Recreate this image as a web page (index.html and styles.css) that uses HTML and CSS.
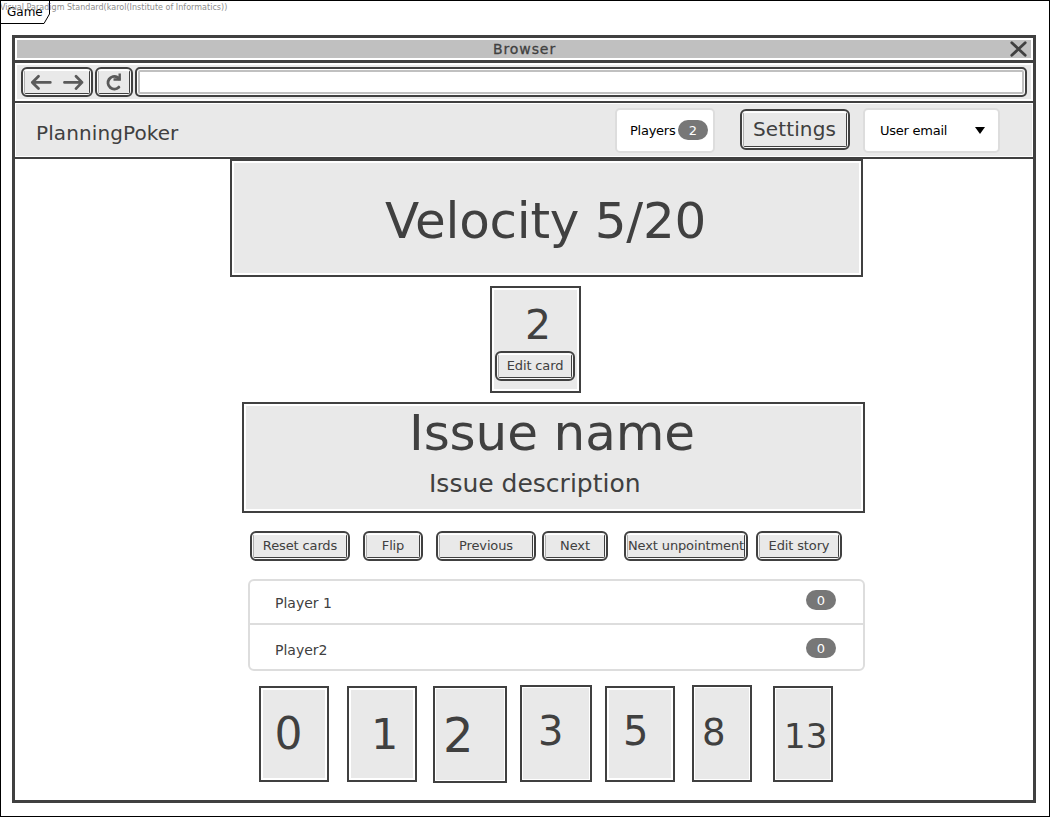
FILE: index.html
```html
<!DOCTYPE html>
<html lang="en">
<head>
<meta charset="utf-8">
<title>Game</title>
<link rel="stylesheet" href="styles.css">
</head>
<body>
<div class="frame">
  <div class="frame-tab">
    <svg class="tab-shape" width="51" height="25" viewBox="0 0 51 25"><path d="M49.500 0V14L44 23.500H0" fill="none" stroke="#000"/></svg>
    <span class="tab-name">Game</span>
    <span class="watermark">Visual Paradigm Standard(karol(Institute of Informatics))</span>
  </div>
  <div class="browser">
    <header class="titlebar">
      <span class="title">Browser</span>
      <svg class="close" width="18" height="18" viewBox="0 0 18 18"><path d="M1.800 2.700L15.200 15.300M15.200 2.700L1.800 15.300" stroke="#404040" stroke-width="2.800" stroke-linecap="round"/></svg>
    </header>
    <div class="toolbar">
      <div class="btn history">
        <svg width="68" height="26" viewBox="0 0 68 26" fill="none" stroke="#5a5a5a" stroke-width="2.800" stroke-linecap="round" stroke-linejoin="round"><path d="M15.500 7.200L9.300 13.400L15.500 19.600M9.300 13.400H27.300M53 7.200L59 13.400L53 19.600M59 13.400H41.500"/></svg>
      </div>
      <div class="btn reload">
        <svg width="34" height="26" viewBox="0 0 34 26" fill="none" stroke="#5a5a5a" stroke-width="3"><path d="M21.800 18.200A6.300 6.300 0 1 1 20.400 8.200L22 9.800" stroke-linecap="round"/><path d="M22.700 4.500V10.500H16.500" stroke-width="2.400"/></svg>
      </div>
      <div class="address"></div>
    </div>
    <nav class="nav">
      <span class="brand">PlanningPoker</span>
      <div class="panel players"><span>Players</span><b class="badge">2</b></div>
      <div class="btn settings">Settings</div>
      <div class="panel user"><span>User email</span><svg width="10" height="7" viewBox="0 0 10 7"><path d="M0 0H10L5 7Z"/></svg></div>
    </nav>
    <main>
      <section class="box velocity">Velocity 5/20</section>
      <section class="box current"><div class="current-value">2</div><div class="btn edit-card">Edit card</div></section>
      <section class="box issue"><h1>Issue name</h1><p>Issue description</p></section>
      <div class="actions">
        <div class="btn reset">Reset cards</div>
        <div class="btn flip">Flip</div>
        <div class="btn previous">Previous</div>
        <div class="btn next">Next</div>
        <div class="btn unpointed">Next unpointment</div>
        <div class="btn story">Edit story</div>
      </div>
      <div class="list">
        <div class="row first"><span>Player 1</span><b class="badge">0</b></div>
        <div class="row second"><span>Player2</span><b class="badge">0</b></div>
      </div>
      <div class="deck">
        <div class="box c0">0</div>
        <div class="box c1">1</div>
        <div class="box thin c2">2</div>
        <div class="box thin c3">3</div>
        <div class="box c5">5</div>
        <div class="box thin c8">8</div>
        <div class="box thin c13">13</div>
      </div>
    </main>
  </div>
</div>
</body>
</html>
```
FILE: styles.css
```css
* { box-sizing: border-box; }
body {
  margin: 0;
  background: #fff;
  color: #404040;
  font-family: "DejaVu Sans", sans-serif;
  white-space: nowrap;
}
svg { display: block; }
.frame {
  position: relative;
  width: 1050px;
  height: 817px;
  border: 1px solid #000;
  padding: 34px 0 0 11px;
  overflow: hidden;
}

/* diagram tab and watermark lie over the frame corner */
.frame-tab { position: absolute; left: -1px; top: -1px; line-height: 1; }
.tab-shape { position: absolute; left: 0; top: 0; }
.tab-name { position: absolute; left: 7px; top: 6px; font-size: 12px; color: #000; }
.watermark { position: absolute; left: 0; top: 4px; font-size: 8px; letter-spacing: 0.02px; color: #8c8c8c; }

.browser { width: 1024px; height: 768px; border: 3px solid #404040; }

.titlebar {
  display: flex;
  height: 25px;
  padding-top: 4px;
  border-bottom: 3px solid #404040;
  background: #c0c0c0;
  box-shadow: inset 0 0 0 2px #fff;
}
.title { margin-left: 478px; width: 517px; font-size: 14px; line-height: 14px; letter-spacing: 0.9px; -webkit-text-stroke: 0.3px #404040; }
.close { margin-top: -2px; }

.toolbar {
  display: flex;
  gap: 2px;
  height: 40px;
  padding: 4px 6px;
  border-bottom: 2px solid #404040;
  background: #e9e9e9;
  box-shadow: inset 0 0 0 2px #fff;
}
.history { width: 72px; }
.reload { width: 38px; }
.address {
  width: 892px;
  height: 30px;
  border: 2px solid #404040;
  border-radius: 5px;
  background: #fff;
  box-shadow: inset 0 0 0 1px #fff, inset 0 0 0 3px #c0c0c0;
}

.btn {
  position: relative;
  flex: none;
  height: 30px;
  border: 2px solid #404040;
  border-radius: 6px;
  background: #e9e9e9;
  box-shadow: inset 0 0 0 2px #fafafa;
  font-size: 13px;
  line-height: 13px;
  letter-spacing: -0.13px;
  text-align: center;
}
.btn::after {
  content: "";
  position: absolute;
  inset: 1px;
  border: 1px solid;
  border-color: #fff #404040 #404040 #b0b0b0;
  border-radius: 2px;
}

.nav {
  display: flex;
  height: 56px;
  padding: 5px 0 0 21px;
  border-bottom: 2px solid #404040;
  background: #e9e9e9;
  box-shadow: inset 0 0 0 1px #fff;
}
.brand { width: 579px; padding-top: 15px; font-size: 20px; line-height: 20px; letter-spacing: 0.1px; }
.panel {
  display: flex;
  height: 45px;
  border: 2px solid #ddd;
  border-radius: 5px;
  background: #fff;
  color: #000;
  font-size: 13px;
  line-height: 13px;
  letter-spacing: -0.25px;
}
.players { width: 100px; padding: 10px 0 0 13px; }
.players span { width: 48px; padding-top: 4px; }
.badge {
  width: 30px;
  height: 20px;
  padding-top: 4px;
  border-radius: 10px;
  background: #777;
  color: #fff;
  font-size: 13px;
  font-weight: normal;
  line-height: 13px;
  letter-spacing: 0;
  text-align: center;
}
.settings { width: 110px; height: 41px; margin: 1px 13px 0 25px; padding: 8px 1px 0 0; font-size: 20px; line-height: 20px; letter-spacing: 0.15px; }
.user { width: 137px; padding: 14px 0 0 15px; }
.user span { width: 95px; }
.user svg { margin-top: 3px; }

.box { flex: none; border: 2px solid #404040; background: #e9e9e9; box-shadow: inset 0 0 0 2px #fff; }
.thin { box-shadow: inset 0 0 0 1px #fff; }

.velocity { width: 633px; height: 118px; margin-left: 215px; padding: 35px 0 0 153px; font-size: 50px; line-height: 50px; letter-spacing: -0.25px; }
.current { width: 91px; height: 107px; margin: 9px 0 0 475px; padding-top: 17px; }
.current-value { padding-left: 33px; font-size: 41px; line-height: 41px; }
.edit-card { width: 80px; margin: 5px 0 0 3px; padding-top: 6px; }
.issue { width: 623px; height: 111px; margin: 9px 0 0 227px; padding-top: 4px; }
.issue h1 { margin: 0; padding-left: 165px; font-size: 50px; font-weight: normal; line-height: 50px; letter-spacing: -0.1px; }
.issue p { margin: 13px 0 0; padding-left: 185px; font-size: 25px; line-height: 25px; }

.actions { display: flex; margin: 18px 0 0 235px; }
.actions .btn { padding-top: 6px; }
.reset { width: 100px; margin-right: 13px; }
.flip { width: 60px; margin-right: 13px; }
.previous { width: 100px; margin-right: 6px; }
.next { width: 66px; margin-right: 16px; }
.unpointed { width: 124px; margin-right: 8px; }
.story { width: 86px; }

.list { width: 617px; height: 92px; margin: 18px 0 0 233px; border: 2px solid #ddd; border-radius: 6px; }
.row { display: flex; padding-left: 25px; font-size: 14px; line-height: 14px; }
.row span { width: 531px; }
.first { height: 44px; padding-top: 9px; border-bottom: 2px solid #ddd; }
.first span { padding-top: 6px; }
.second { padding-top: 13px; }
.second span { padding-top: 5px; }

.deck { display: flex; align-items: flex-start; margin: 14px 0 0 244px; line-height: 1; }
.deck .box { height: 96px; margin-top: 1px; }
.deck .c0 { width: 70px; margin-right: 18px; padding: 24px 0 0 13.5px; font-size: 44px; }
.deck .c1 { width: 70px; margin-right: 16px; padding: 25px 0 0 22px; font-size: 43px; }
.deck .c2 { width: 74px; height: 97px; margin-right: 13px; padding: 23px 0 0 8px; font-size: 48px; }
.deck .c3 { width: 72px; height: 97px; margin: 0 13px 0 0; padding: 24px 0 0 16px; font-size: 40px; }
.deck .c5 { width: 70px; margin-right: 17px; padding: 23px 0 0 16px; font-size: 40px; }
.deck .c8 { width: 60px; height: 97px; margin: 0 21px 0 0; padding: 27px 0 0 8px; font-size: 37px; }
.deck .c13 { width: 60px; padding: 31px 0 0 9px; font-size: 34px; }
```
